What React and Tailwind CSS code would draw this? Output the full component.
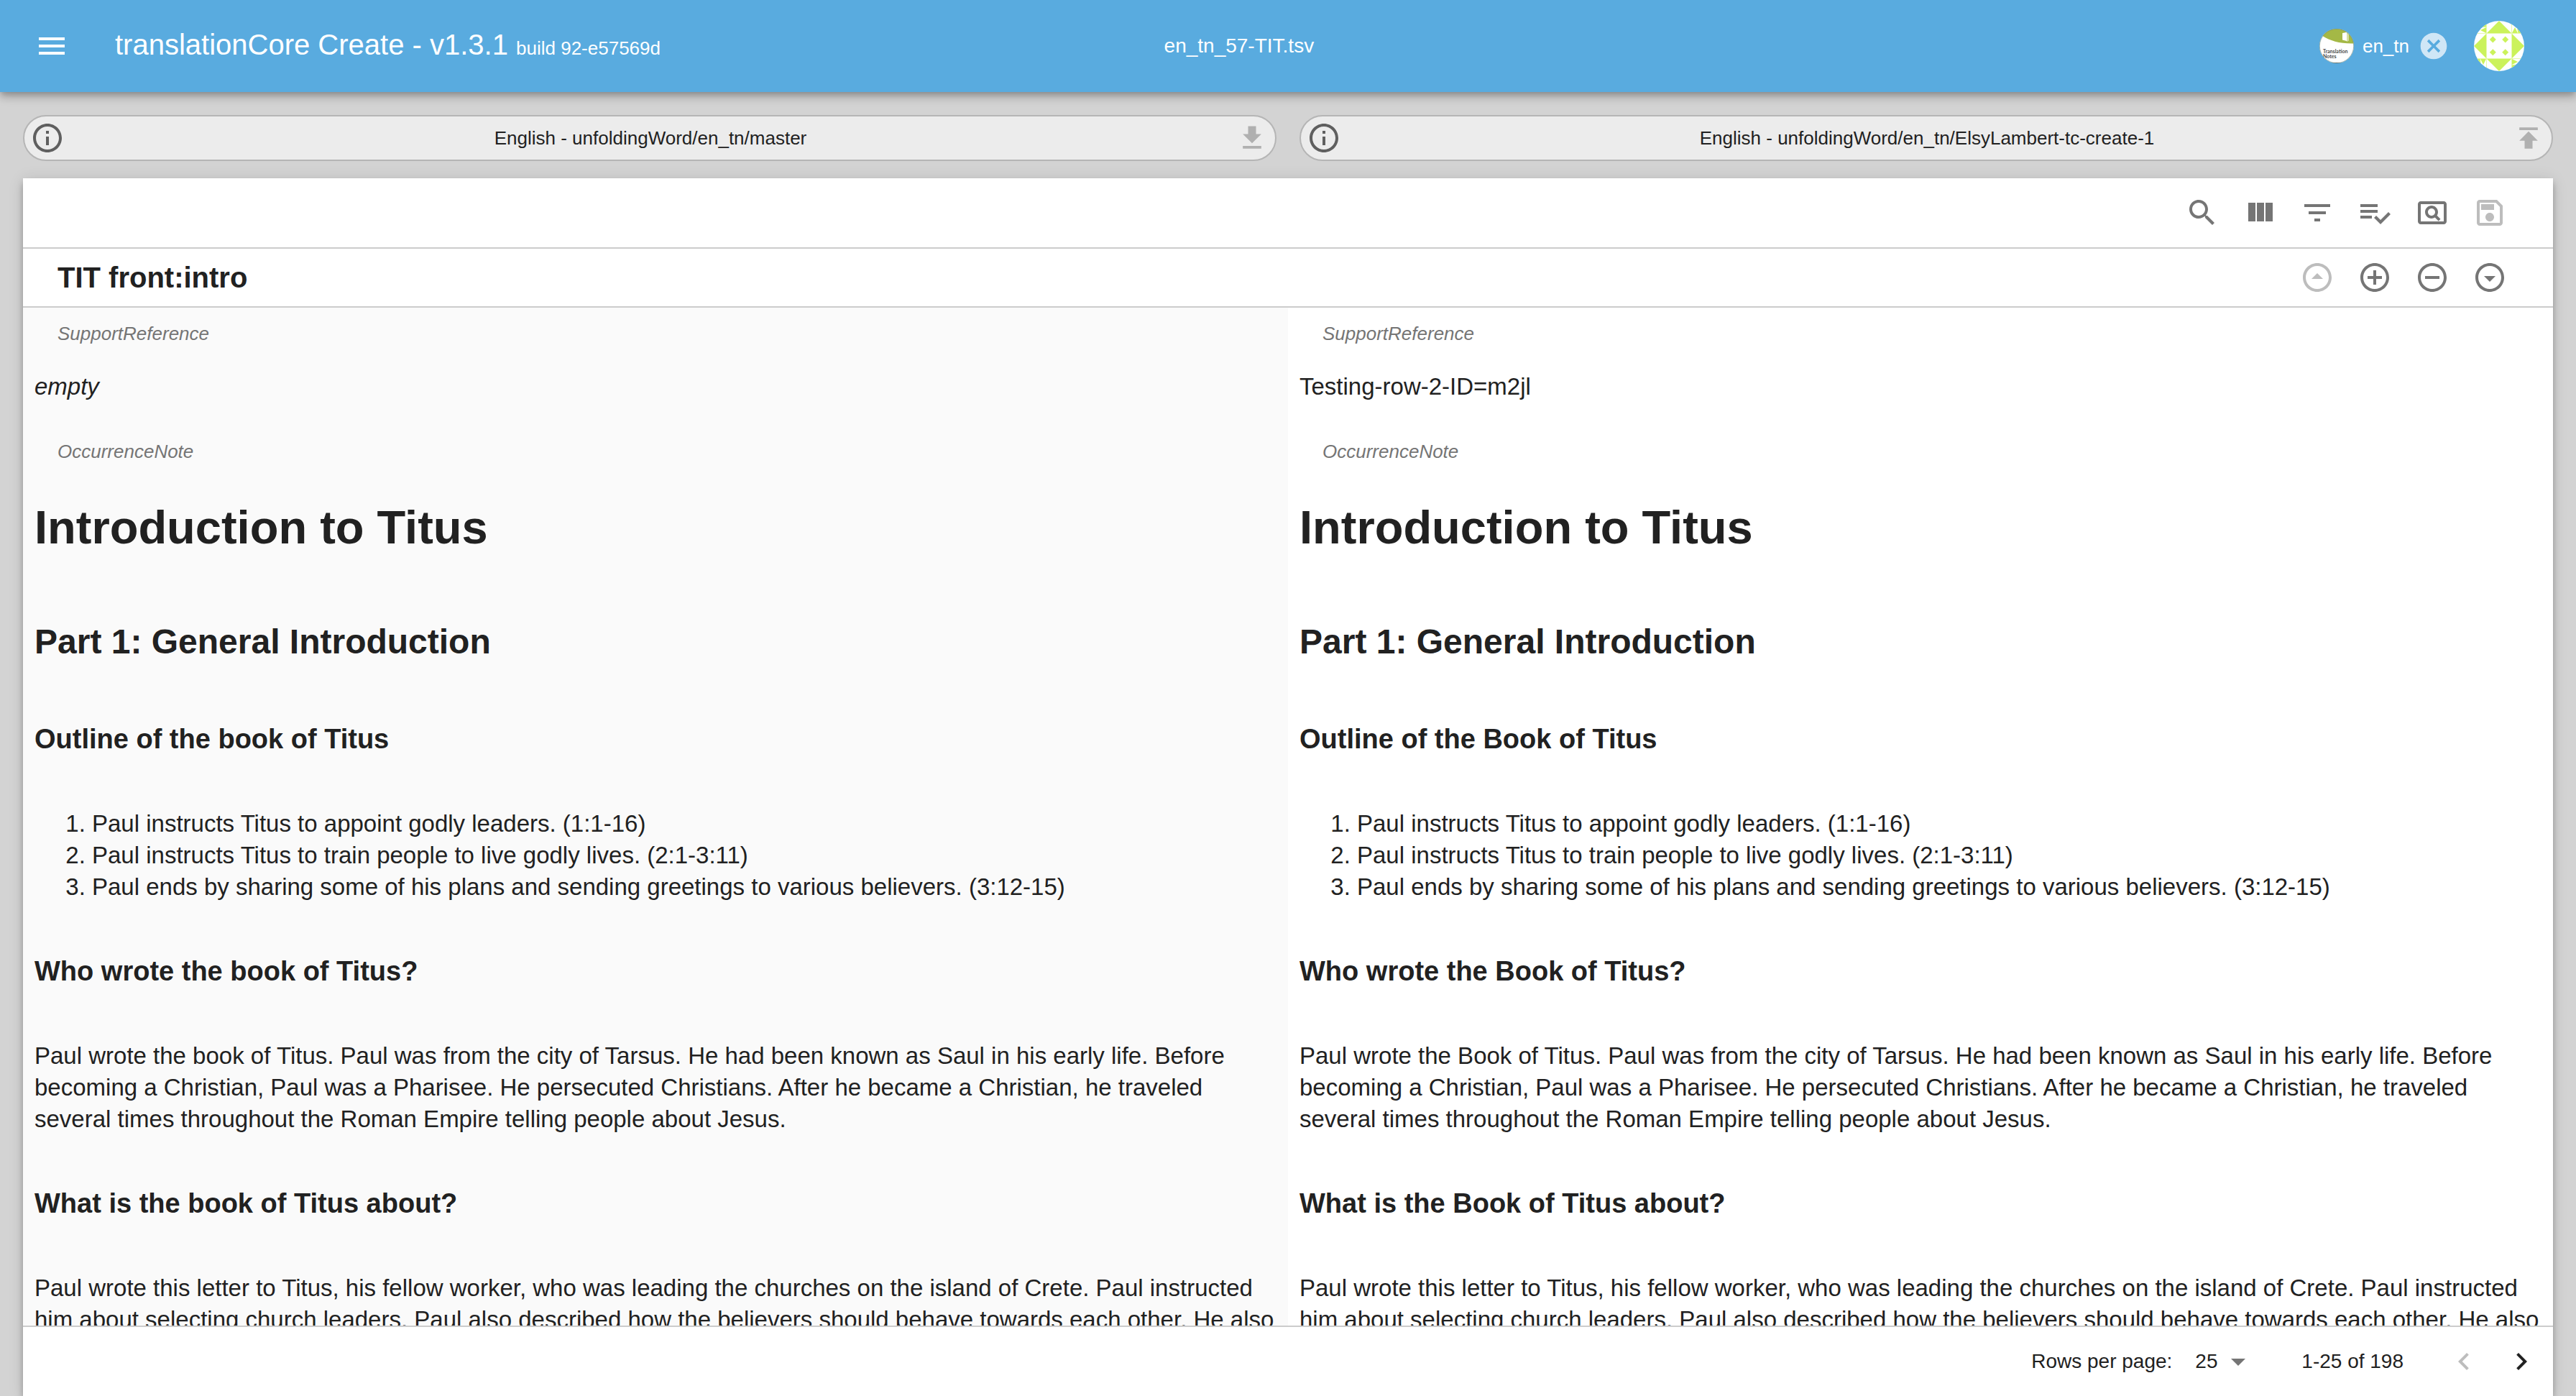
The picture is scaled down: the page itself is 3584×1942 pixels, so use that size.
const PATHS = {
  menu: "M3 18h18v-2H3v2zm0-5h18v-2H3v2zm0-7v2h18V6H3z",
  info: "M11 7h2v2h-2zm0 4h2v6h-2zm1-9C6.48 2 2 6.48 2 12s4.48 10 10 10 10-4.48 10-10S17.52 2 12 2zm0 18c-4.41 0-8-3.59-8-8s3.59-8 8-8 8 3.59 8 8-3.59 8-8 8z",
  download: "M19 9h-4V3H9v6H5l7 7 7-7zM5 18v2h14v-2H5z",
  publish: "M5 4v2h14V4H5zm0 10h4v6h6v-6h4l-7-7-7 7z",
  cancel: "M12 2C6.47 2 2 6.47 2 12s4.47 10 10 10 10-4.47 10-10S17.53 2 12 2zm5 13.59L15.59 17 12 13.41 8.41 17 7 15.59 10.59 12 7 8.41 8.41 7 12 10.59 15.59 7 17 8.41 13.41 12 17 15.59z",
  search: "M15.5 14h-.79l-.28-.27C15.41 12.59 16 11.11 16 9.5 16 5.91 13.09 3 9.5 3S3 5.91 3 9.5 5.91 16 9.5 16c1.61 0 3.09-.59 4.23-1.57l.27.28v.79l5 4.99L20.49 19l-4.99-5zm-6 0C7.01 14 5 11.99 5 9.5S7.01 5 9.5 5 14 7.01 14 9.5 11.99 14 9.5 14z",
  columns: "M10 18h5V5h-5v13zm-6 0h5V5H4v13zM16 5v13h5V5h-5z",
  filter: "M10 18h4v-2h-4v2zM3 6v2h18V6H3zm3 7h12v-2H6v2z",
  validate: "M14 10H2v2h12v-2zm0-4H2v2h12V6zM2 16h8v-2H2v2zm19.5-4.5L23 13l-6.99 7-4.51-4.5L13 14l3.01 3 5.49-5.5z",
  preview: "M11.49 16c.88 0 1.7-.26 2.39-.7l2.44 2.44 1.42-1.42-2.44-2.43c.44-.7.7-1.51.7-2.39C16 9.01 13.99 7 11.5 7S7 9.01 7 11.5 9.01 16 11.49 16zm.01-7c1.38 0 2.5 1.12 2.5 2.5S12.88 14 11.5 14 9 12.88 9 11.5 10.12 9 11.5 9zM20 4H4c-1.1 0-2 .9-2 2v12c0 1.1.9 2 2 2h16c1.1 0 2-.9 2-2V6c0-1.1-.9-2-2-2zm0 14H4V6h16v12z",
  save: "M17 3H5c-1.11 0-2 .9-2 2v14c0 1.1.89 2 2 2h14c1.1 0 2-.9 2-2V7l-4-4zm2 16H5V5h11.17L19 7.83V19zm-7-7c-1.66 0-3 1.34-3 3s1.34 3 3 3 3-1.34 3-3-1.34-3-3-3zM6 6h9v4H6z",
  moveUp: "M12 20c-4.41 0-8-3.59-8-8s3.59-8 8-8 8 3.59 8 8-3.59 8-8 8m0 2c5.52 0 10-4.48 10-10S17.52 2 12 2 2 6.48 2 12s4.48 10 10 10zm0-13l-4 4h8z",
  add: "M13 7h-2v4H7v2h4v4h2v-4h4v-2h-4V7zm-1-5C6.48 2 2 6.48 2 12s4.48 10 10 10 10-4.48 10-10S17.52 2 12 2zm0 18c-4.41 0-8-3.59-8-8s3.59-8 8-8 8 3.59 8 8-3.59 8-8 8z",
  remove: "M7 11v2h10v-2H7zm5-9C6.48 2 2 6.48 2 12s4.48 10 10 10 10-4.48 10-10S17.52 2 12 2zm0 18c-4.41 0-8-3.59-8-8s3.59-8 8-8 8 3.59 8 8-3.59 8-8 8z",
  moveDown: "M12 4c4.41 0 8 3.59 8 8s-3.59 8-8 8-8-3.59-8-8 3.59-8 8-8m0-2C6.48 2 2 6.48 2 12s4.48 10 10 10 10-4.48 10-10S17.52 2 12 2zm0 13l-4-4h8z",
  dropDown: "M7 10l5 5 5-5z",
  chevronLeft: "M15.41 7.41L14 6l-6 6 6 6 1.41-1.41L10.83 12z",
  chevronRight: "M10 6L8.59 7.41 13.17 12l-4.58 4.59L10 18l6-6z",
};

function Icon({ name, className = "size-12" }) {
  return (
    <svg viewBox="0 0 24 24" fill="currentColor" aria-hidden="true" className={"block shrink-0 " + className}>
      <path d={PATHS[name]} />
    </svg>
  );
}

function IconButton({ name, label, disabled, className = "text-[#757575]", iconClass }) {
  return (
    <button type="button" aria-label={label} disabled={disabled} className={"shrink-0 disabled:text-[#bdbdbd] " + className}>
      <Icon name={name} className={iconClass} />
    </button>
  );
}

function OrgLogo() {
  return (
    <svg viewBox="0 0 48 48" className="size-12 shrink-0" role="img" aria-label="Translation Notes">
      <defs>
        <clipPath id="org-clip">
          <circle cx="24" cy="24" r="24" />
        </clipPath>
      </defs>
      <g clipPath="url(#org-clip)">
        <rect width="48" height="48" fill="#ffffff" />
        <path d="M0 0H48V20.5C29 21 15 17 3.500 9.500L0 7z" fill="#a4b846" />
        <path d="M34 7l4-3.500 3 2v11l-3 1.500z" fill="#d5dea5" />
        <path d="M32 6l6-1v12l-6-1.500z" fill="#ffffff" />
        <rect x="16" y="47" width="16" height="1" fill="#555555" />
        <text x="5" y="34" fontSize="7" fontWeight="700" fill="#4a4a4a" fontFamily="Lato, sans-serif">Translation</text>
        <text x="5" y="41" fontSize="7" fontWeight="700" fill="#4a4a4a" fontFamily="Lato, sans-serif">Notes</text>
      </g>
      <circle cx="24" cy="24" r="23.700" fill="none" stroke="#6f8a7c" strokeWidth="0.600" />
    </svg>
  );
}

function UserAvatar() {
  return (
    <svg viewBox="0 0 70 70" className="size-[70px]" aria-hidden="true">
      <defs>
        <clipPath id="user-clip">
          <circle cx="35" cy="35" r="35" />
        </clipPath>
      </defs>
      <g clipPath="url(#user-clip)" fill="#cbf25b">
        <rect width="70" height="70" fill="#ffffff" />
        <path d="M35 0L52 17H18z" />
        <path d="M35 70L52 53H18z" />
        <path d="M0 35L17 18V52z" />
        <path d="M70 35L53 18V52z" />
        <rect x="17.500" y="17.500" width="35" height="35" fill="none" stroke="#e5f9ad" strokeWidth="1" />
        <path d="M17.500 0V17.500M52.500 0V17.500M17.500 52.500V70M52.500 52.500V70M0 17.500H17.500M52.500 17.500H70M0 52.500H17.500M52.500 52.500H70" fill="none" stroke="#e5f9ad" strokeWidth="1" />
        <path d="M26.300 21.500l4.500 4.500-4.500 4.500-4.500-4.500z" />
        <path d="M43.700 21.500l4.500 4.500-4.500 4.500-4.500-4.500z" />
        <path d="M26.300 39.200l4.500 4.500-4.500 4.500-4.500-4.500z" />
        <path d="M43.700 39.200l4.500 4.500-4.500 4.500-4.500-4.500z" />
        <path d="M17 9V17L9 13z" />
        <path d="M17 0V8.500L10 9z" />
        <path d="M53 17L57 9L61 17z" />
        <path d="M61.500 17L60 9.500L70 17z" />
        <path d="M9 53H17L13 61z" />
        <path d="M0 53H8.500L10 61z" />
        <path d="M53 53L61 57L53 61z" />
        <path d="M53 61.500L61 60.500L53 70z" />
      </g>
    </svg>
  );
}

function SourceBar({ name, action, actionLabel }) {
  return (
    <div className="flex h-16 items-center rounded-full border-2 border-[#b5b5b5] bg-[#ececec] pr-2.5 pl-2">
      <IconButton name="info" label="Information" className="text-[#5f5f5f]" />
      <span className="flex-1 text-center text-[26px] leading-10">{name}</span>
      <IconButton name={action} label={actionLabel} className="text-[#b0b0b0]" iconClass="size-11" />
    </div>
  );
}

function FieldLabel({ children }) {
  return <div className="pl-8 text-[26px] leading-[44px] text-[#757575] italic">{children}</div>;
}

function Heading3({ children }) {
  return <h3 className="mt-[69px] mb-[70px] text-[38px] leading-[52px] font-bold">{children}</h3>;
}

const OUTLINE = [
  "Paul instructs Titus to appoint godly leaders. (1:1-16)",
  "Paul instructs Titus to train people to live godly lives. (2:1-3:11)",
  "Paul ends by sharing some of his plans and sending greetings to various believers. (3:12-15)",
];

function Note({ reference, book, className }) {
  return (
    <article className={"px-4 pt-3.5 pb-8 text-[33px] leading-[44px] " + className}>
      <FieldLabel>SupportReference</FieldLabel>
      <div className="mt-[30px] mb-[46px]">{reference}</div>
      <FieldLabel>OccurrenceNote</FieldLabel>
      <h1 className="mt-10 mb-[82px] text-[65px] leading-[88px] font-bold">Introduction to Titus</h1>
      <h2 className="mb-[76px] text-[48px] leading-[66px] font-bold">Part 1: General Introduction</h2>
      <Heading3>{`Outline of the ${book} of Titus`}</Heading3>
      <ol className="list-decimal pl-20">
        {OUTLINE.map((item) => (
          <li key={item}>{item}</li>
        ))}
      </ol>
      <Heading3>{`Who wrote the ${book} of Titus?`}</Heading3>
      <p>
        {`Paul wrote the ${book} of Titus. Paul was from the city of Tarsus. He had been known as Saul in his early life. Before becoming a Christian, Paul was a Pharisee. He persecuted Christians. After he became a Christian, he traveled several times throughout the Roman Empire telling people about Jesus.`}
      </p>
      <Heading3>{`What is the ${book} of Titus about?`}</Heading3>
      <p>
        Paul wrote this letter to Titus, his fellow worker, who was leading the churches on the island of Crete. Paul
        instructed him about selecting church leaders. Paul also described how the believers should behave towards each
        other. He also
      </p>
    </article>
  );
}

export default function App() {
  return (
    <div className="flex h-screen flex-col overflow-hidden bg-[#d3d3d3] font-['Liberation_Sans',Arial,sans-serif] text-[#212121]">
      <header className="z-10 grid h-32 shrink-0 grid-cols-[14fr_auto_15fr] items-center bg-[#59abdf] pr-[72px] pl-12 text-white shadow-[0_4px_8px_-2px_rgba(0,0,0,0.2),0_8px_10px_0_rgba(0,0,0,0.14),0_2px_20px_0_rgba(0,0,0,0.12)]">
        <div className="flex items-center gap-16">
          <IconButton name="menu" label="Menu" className="text-white" />
          <h1 className="text-[40px] leading-16">
            translationCore Create - v1.3.1 <span className="text-[26px]">build 92-e57569d</span>
          </h1>
        </div>
        <div className="text-[28px] leading-10">en_tn_57-TIT.tsv</div>
        <div className="flex items-center justify-end">
          <OrgLogo />
          <span className="ml-3 text-[26px] leading-10">en_tn</span>
          <IconButton name="cancel" label="Remove en_tn" className="mr-[34px] ml-3 text-[#cfe6f6]" iconClass="size-11" />
          <button type="button" aria-label="Account">
            <UserAvatar />
          </button>
        </div>
      </header>

      <div className="grid shrink-0 grid-cols-2 gap-8 px-8 pt-8 pb-6">
        <SourceBar name="English - unfoldingWord/en_tn/master" action="download" actionLabel="Download" />
        <SourceBar name="English - unfoldingWord/en_tn/ElsyLambert-tc-create-1" action="publish" actionLabel="Publish" />
      </div>

      <main className="mx-8 flex min-h-0 flex-1 flex-col bg-white shadow-[0_4px_8px_-2px_rgba(0,0,0,0.2),0_8px_10px_0_rgba(0,0,0,0.14),0_2px_20px_0_rgba(0,0,0,0.12)]">
        <div className="flex h-[98px] shrink-0 items-center justify-end gap-8 border-b-2 border-[#cccccc] pr-16">
          <IconButton name="search" label="Search" />
          <IconButton name="columns" label="View columns" />
          <IconButton name="filter" label="Filter table" />
          <IconButton name="validate" label="Validate" />
          <IconButton name="preview" label="Preview" />
          <IconButton name="save" label="Save" disabled />
        </div>

        <div className="flex h-[82px] shrink-0 items-center gap-8 border-b-2 border-[#cccccc] pr-16 pl-12">
          <h2 className="flex-1 text-[40px] leading-12 font-bold">TIT front:intro</h2>
          <IconButton name="moveUp" label="Move row up" disabled />
          <IconButton name="add" label="Add row below" />
          <IconButton name="remove" label="Delete row" />
          <IconButton name="moveDown" label="Move row down" />
        </div>

        <section className="grid min-h-0 flex-1 grid-cols-2 overflow-hidden">
          <Note reference={<em>empty</em>} book="book" className="bg-[#fafafa]" />
          <Note reference="Testing-row-2-ID=m2jl" book="Book" className="" />
        </section>

        <footer className="flex h-[98px] shrink-0 items-center justify-end border-t-2 border-[#cccccc] pr-5 text-[28px] leading-10">
          <label htmlFor="rows-per-page">Rows per page:</label>
          <div className="relative ml-8">
            <select id="rows-per-page" defaultValue="25" className="block w-21 appearance-none bg-transparent">
              <option>10</option>
              <option>25</option>
              <option>50</option>
              <option>100</option>
            </select>
            <span className="pointer-events-none absolute inset-y-0 right-0 flex items-center text-[#757575]">
              <Icon name="dropDown" />
            </span>
          </div>
          <span className="ml-16">1-25 of 198</span>
          <IconButton name="chevronLeft" label="Previous page" disabled className="ml-15" />
          <IconButton name="chevronRight" label="Next page" className="ml-8 text-[#212121]" />
        </footer>
      </main>
    </div>
  );
}
